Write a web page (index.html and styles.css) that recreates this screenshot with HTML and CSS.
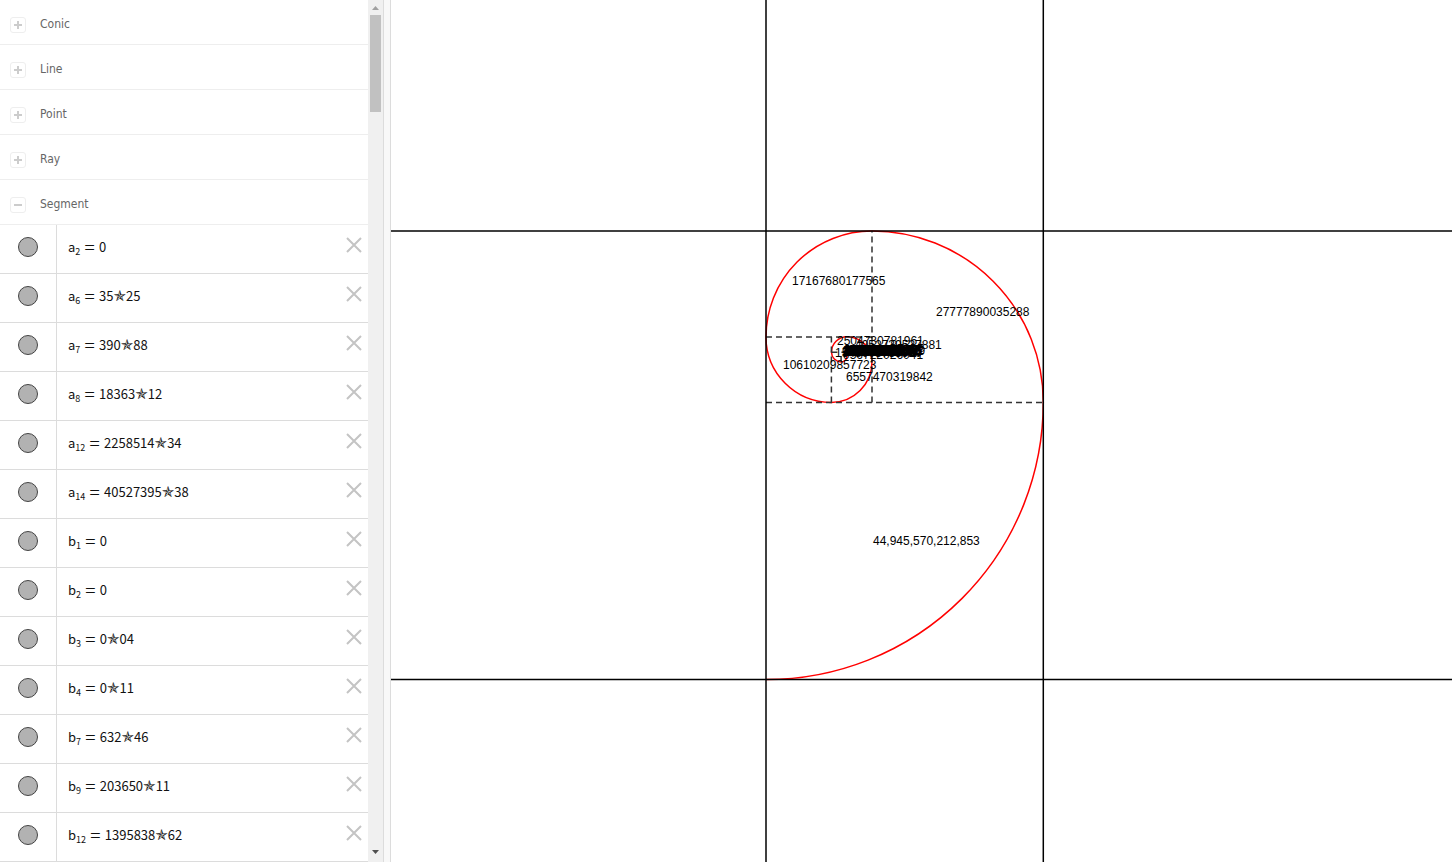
FILE: index.html
```
<!DOCTYPE html>
<html lang="en">
<head>
  <meta charset="UTF-8" />
  <title>Fibonacci Spiral</title>
  <meta name="viewport" content="width=device-width, initial-scale=1.0" />
  <link rel="stylesheet" href="styles.css">
</head>
<body>
  <aside class="algebra">
    <div class="list">
      <div class="group"><button class="toggle" id="g1" aria-expanded="false"></button><label for="g1">Conic</label></div>
      <div class="group"><button class="toggle" id="g2" aria-expanded="false"></button><label for="g2">Line</label></div>
      <div class="group"><button class="toggle" id="g3" aria-expanded="false"></button><label for="g3">Point</label></div>
      <div class="group"><button class="toggle" id="g4" aria-expanded="false"></button><label for="g4">Ray</label></div>
      <div class="group"><button class="toggle open" id="g5" aria-expanded="true"></button><label for="g5">Segment</label></div>
      <div id="segments"></div>
    </div>
    <div class="scrollbar">
      <button class="arrow" aria-label="Scroll up"><svg width="7" height="4"><path d="M0 4L3.5 0L7 4Z" fill="#a0a0a0"/></svg></button>
      <div class="track"><div class="thumb"></div></div>
      <button class="arrow down" aria-label="Scroll down"><svg width="7" height="4"><path d="M0 0L3.5 4L7 0Z" fill="#505050"/></svg></button>
    </div>
  </aside>
  <div class="splitter"></div>

  <main class="graphics">
    <svg class="canvas">
      <g class="spiral">
        <path d="M375 679.6A277.3 277.3 0 0 0 652.3 402.3A171.3 171.3 0 0 0 481 231A106 106 0 0 0 375 337A65.4 65.4 0 0 0 440.4 402.4A40.6 40.6 0 0 0 481 361.8A25 25 0 0 0 456 336.8A15.5 15.5 0 0 0 440.5 352.3A9.6 9.6 0 0 0 450.1 361.9A5.9 5.9 0 0 0 456 356A3.6 3.6 0 0 0 452.4 352.4"/>
      </g>
      <g class="dashed">
        <path d="M375 402.4H652"/>
        <path d="M481 402.4V231"/>
        <path d="M375 337H481"/>
        <path d="M440.4 402.4V337"/>
        <path d="M440.4 352.3H456"/>
        <path d="M450.1 361.9V352"/>
      </g>
      <g class="lines">
        <line x1="0" y1="231" x2="100%" y2="231"/>
        <line x1="0" y1="679.6" x2="100%" y2="679.6"/>
        <line x1="375" y1="0" x2="375" y2="100%"/>
        <line x1="652.3" y1="0" x2="652.3" y2="100%"/>
      </g>
      <g class="labels">
        <text x="482" y="545">44,945,570,212,853</text>
        <text x="545" y="316">27777890035288</text>
        <text x="401" y="285">17167680177565</text>
        <text x="392" y="369">10610209857723</text>
        <text x="455" y="381">6557470319842</text>
        <text x="464" y="349">4052739537881</text>
        <text x="446" y="345">2504730781961</text>
        <text x="444" y="357">1548008755920</text>
        <text x="452" y="359">956722026041</text>
        <text x="454" y="355">591286729879</text>
        <text x="453" y="354">365435296162</text>
        <text x="452" y="356">225851433717</text>
        <text x="451" y="355">139583862445</text>
        <text x="457" y="354">86267571272</text>
        <text x="455" y="355">53316291173</text>
        <text x="451" y="356">32951280099</text>
        <text x="454" y="356">20365011074</text>
        <text x="457" y="354">12586269025</text>
        <text x="453" y="355">7778742049</text>
        <text x="464" y="356">4807526976</text>
        <text x="460" y="354">2971215073</text>
        <text x="452" y="354">1836311903</text>
        <text x="456" y="356">1134903170</text>
        <text x="462" y="355">701408733</text>
        <text x="452" y="355">433494437</text>
        <text x="458" y="356">267914296</text>
        <text x="454" y="354">165580141</text>
        <text x="470" y="355">102334155</text>
        <text x="460" y="354">63245986</text>
        <text x="452" y="356">39088169</text>
        <text x="474" y="354">24157817</text>
        <text x="456" y="355">14930352</text>
      </g>
    </svg>
  </main>

  <script>
    // name, index, value of each segment
    const segments = [
      ["a", 2, "0"],
      ["a", 6, "35✯25"],
      ["a", 7, "390✯88"],
      ["a", 8, "18363✯12"],
      ["a", 12, "2258514✯34"],
      ["a", 14, "40527395✯38"],
      ["b", 1, "0"],
      ["b", 2, "0"],
      ["b", 3, "0✯04"],
      ["b", 4, "0✯11"],
      ["b", 7, "632✯46"],
      ["b", 9, "203650✯11"],
      ["b", 12, "1395838✯62"]
    ];

    document.getElementById("segments").innerHTML = segments.map(([name, index, value]) => `
      <div class="row">
        <div class="marble-cell"><button class="marble" aria-label="Show or hide"></button></div>
        <div class="value">${name}<sub>${index}</sub><span class="eq">=</span>${value.replace("✯", '<span class="star">✯</span>')}</div>
        <button class="close" aria-label="Delete"><svg width="16" height="16"><path d="M1 1L15 15M15 1L1 15"/></svg></button>
      </div>`).join("");
  </script>
</body>
</html>
```
FILE: styles.css
```
* {
  box-sizing: border-box;
}

body {
  margin: 0;
  height: 100vh;
  display: flex;
  overflow: hidden;
  background: #fff;
  font-family: "DejaVu Sans Condensed", "DejaVu Sans", sans-serif;
}

button {
  padding: 0;
  border: 0;
  background: none;
}

.algebra {
  flex: none;
  width: 383px;
  display: flex;
}

.list {
  flex: 1;
  overflow: hidden;
}

.group {
  height: 45px;
  display: flex;
  align-items: center;
  gap: 14px;
  padding: 6px 0 0 10px;
  border-bottom: 1px solid #eee;
  font-size: 12px;
  color: #666;
}

.group label {
  padding-bottom: 2px;
}

.toggle {
  width: 16px;
  height: 16px;
  border: 1px solid #eee;
  border-radius: 3px;
  background: linear-gradient(#ccc, #ccc) center / 8px 2px no-repeat,
    linear-gradient(#ccc, #ccc) center / 2px 8px no-repeat;
}

.toggle.open {
  background: linear-gradient(#ccc, #ccc) center / 8px 2px no-repeat;
}

.row {
  height: 49px;
  display: flex;
  border-bottom: 1px solid #dcdcdc;
}

.marble-cell {
  width: 57px;
  padding: 12px 0 0 18px;
  border-right: 1px solid #dcdcdc;
}

.marble {
  display: block;
  width: 20px;
  height: 20px;
  border: 1px solid #444;
  border-radius: 50%;
  background: #b2b2b2;
}

.value {
  flex: 1;
  padding: 12px 0 0 11px;
  font-family: "Noto Sans CJK SC", sans-serif;
  font-size: 13px;
  line-height: 20px;
  white-space: nowrap;
  color: #111;
}

.value sub {
  font-size: 9px;
  line-height: 0;
  vertical-align: -3px;
}

.eq {
  margin: 0 4px;
  font-family: "Liberation Serif", serif;
  font-size: 19px;
  line-height: 0;
  vertical-align: -2px;
}

.star {
  font-family: "DejaVu Sans", sans-serif;
  font-size: 15px;
  line-height: 0;
}

.close {
  align-self: flex-start;
  margin: 12px 6px 0 0;
}

.close svg {
  display: block;
  fill: none;
  stroke: #c4c4c4;
  stroke-width: 2;
}

.scrollbar {
  width: 15px;
  display: flex;
  flex-direction: column;
  background: #f0f0f0;
}

.arrow {
  height: 15px;
  display: flex;
  align-items: center;
  justify-content: center;
}

.arrow.down {
  height: 20px;
}

.track {
  flex: 1;
}

.thumb {
  width: 11px;
  height: 97px;
  margin-left: 2px;
  background: #c1c1c1;
}

.splitter {
  flex: none;
  width: 8px;
  border: 1px solid #dcdcdc;
  border-width: 0 1px;
  background: #f8f8f8;
}

.graphics {
  flex: 1;
}

.canvas {
  display: block;
  width: 100%;
  height: 100%;
}

.spiral {
  fill: none;
  stroke: #f00;
  stroke-width: 1.5;
}

.dashed {
  fill: none;
  stroke: #333;
  stroke-width: 1.5;
  stroke-dasharray: 6 4;
}

.lines {
  stroke: #000;
  stroke-width: 1.5;
}

.labels {
  font-family: "Liberation Sans", Arial, sans-serif;
  font-size: 12px;
}
```
